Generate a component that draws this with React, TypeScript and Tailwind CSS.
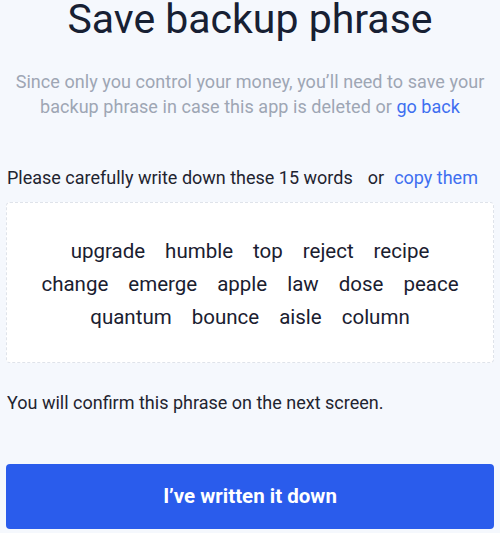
import React from "react";

const words = [
  "upgrade",
  "humble",
  "top",
  "reject",
  "recipe",
  "change",
  "emerge",
  "apple",
  "law",
  "dose",
  "peace",
  "quantum",
  "bounce",
  "aisle",
  "column",
];

export default function App() {
  return (
    <div className="w-[500px] h-[533px] bg-[#f5f8fd] font-['Roboto',sans-serif] flex flex-col px-[6px] overflow-hidden">
      <h1 className="text-center text-[41px] leading-[38px] text-[#172033] whitespace-nowrap">
        Save backup phrase
      </h1>
      <p className="text-center text-[18px] leading-[25px] tracking-[0.05px] text-[#9ea6b4] mt-[31px]">
        Since only you control your money, you’ll need to save your backup
        phrase in case this app is deleted or{" "}
        <span className="text-[#3e6ff0]">go back</span>
      </p>
      <div className="mt-[47px] text-[18px] leading-[24px] text-[#1f2430] pl-[1px] flex whitespace-nowrap">
        <span>Please carefully write down these 15 words</span>
        <span className="ml-[15px]">or</span>
        <span className="ml-[10px] text-[#3e6ff0]">copy them</span>
      </div>
      <div className="mt-[12px] h-[161px] bg-white border border-dashed border-[#dfe3ea] rounded-[4px] flex items-center justify-center px-[28px] pt-[4px]">
        <div className="flex flex-wrap justify-center gap-x-[20px] text-[20.5px] leading-[33px] text-[#1a2030]">
          {words.map((w) => (
            <span key={w}>{w}</span>
          ))}
        </div>
      </div>
      <p className="mt-[28px] text-[18px] leading-[24px] text-[#1f2430] pl-[1px]">
        You will confirm this phrase on the next screen.
      </p>
      <button className="mt-[49px] h-[65px] w-full shrink-0 bg-[#2a5cec] rounded-[4px] text-white text-[20.5px] font-bold">
        I’ve written it down
      </button>
    </div>
  );
}
